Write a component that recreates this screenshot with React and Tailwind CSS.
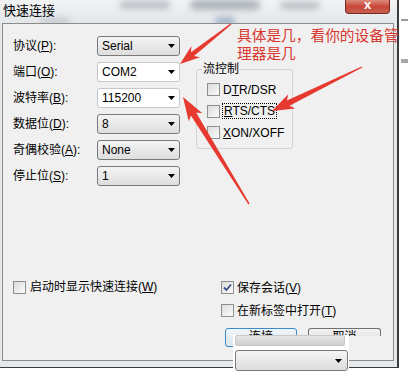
import React from 'react';

// tapered annotation arrow, tail -> tip
function arrowPts(x1, y1, x2, y2, head, headW, tail, neck) {
  const dx = x2 - x1;
  const dy = y2 - y1;
  const len = Math.hypot(dx, dy);
  const ux = dx / len;
  const uy = dy / len;
  const px = -uy;
  const py = ux;
  const bx = x2 - ux * head;
  const by = y2 - uy * head;
  const p = (x, y, s) => `${(x + px * s).toFixed(1)},${(y + py * s).toFixed(1)}`;
  return [
    p(x1, y1, tail),
    p(bx + ux * 2, by + uy * 2, neck),
    p(bx - ux * 2, by - uy * 2, headW),
    `${x2},${y2}`,
    p(bx - ux * 2, by - uy * 2, -headW),
    p(bx + ux * 2, by + uy * 2, -neck),
    p(x1, y1, -tail),
  ].join(' ');
}

const DownTri = () => (
  <svg width="7" height="4" viewBox="0 0 7 4" className="shrink-0">
    <polygon points="0,0 7,0 3.5,4" fill="#000" />
  </svg>
);

const Combo = ({ value, edit }) => (
  <div
    className={
      edit
        ? 'h-[20px] w-[83px] rounded-[3px] border border-[#c5c7cc] bg-white flex items-center justify-between pl-[4px] pr-[4px]'
        : 'h-[20px] w-[83px] rounded-[3px] border border-[#7a7a7a] bg-gradient-to-b from-[#f4f4f4] to-[#dedede] flex items-center justify-between pl-[4px] pr-[4px]'
    }
  >
    <span className="leading-none">{value}</span>
    <DownTri />
  </div>
);

const Box = ({ checked }) => (
  <span className="w-[13px] h-[13px] shrink-0 border border-[#8e8f8f] bg-gradient-to-br from-[#dcdcdc] to-[#fbfbfb] flex items-center justify-center">
    {checked && (
      <svg width="9" height="9" viewBox="0 0 9 9">
        <path d="M1 4.5 L3.5 7 L8 1.5" stroke="#3b4f8a" strokeWidth="1.8" fill="none" />
      </svg>
    )}
  </span>
);

const Label = ({ text, k }) => (
  <span className="leading-none whitespace-nowrap">
    {text}(<u>{k}</u>):
  </span>
);

const rows = [
  ['协议', 'P', 'Serial', false],
  ['端口', 'O', 'COM2', true],
  ['波特率', 'B', '115200', true],
  ['数据位', 'D', '8', false],
  ['奇偶校验', 'A', 'None', false],
  ['停止位', 'S', '1', false],
];

export default function App() {
  return (
    <div className="relative w-[408px] h-[376px] overflow-hidden bg-white text-[12px] text-black font-['Liberation_Sans','Noto_Sans_CJK_SC',sans-serif]">
      <div className="w-[399px] h-[368px] border-r-2 border-b border-[#3c3c3c] bg-[#e6e9ec] flex flex-col">
        {/* title bar */}
        <div className="relative h-[23px] flex items-start justify-between pr-[7px] bg-gradient-to-b from-[#f1f3f5] to-[#e4e7ea] overflow-hidden">
          <div className="absolute left-[120px] top-[1px] w-[50px] h-[8px] rounded-full bg-[#b9bec4] blur-[3px]" />
          <div className="absolute left-[190px] top-[0px] w-[70px] h-[10px] rounded-full bg-[#aeb4ba] blur-[3px]" />
          <div className="absolute left-[280px] top-[2px] w-[40px] h-[7px] rounded-full bg-[#b6bcc2] blur-[3px]" />
          <div className="absolute left-[40px] top-[18px] w-[30px] h-[6px] rounded-full bg-[#c3c8cd] blur-[3px]" />
          <div className="absolute left-[215px] top-[17px] w-[20px] h-[8px] rounded-full bg-[#9fb0c8] blur-[3px]" />
          <span className="relative pl-[3px] pt-[3px] text-[13px] leading-[16px]">快速连接</span>
          <div className="relative w-[45px] h-[14px] rounded-b-[4px] border border-t-0 border-[#7a2a20] bg-gradient-to-b from-[#d98a7c] via-[#c9473a] to-[#c4604f] flex items-start justify-center">
            <span className="text-white font-bold text-[13px] leading-[10px]">x</span>
          </div>
        </div>

        {/* content panel */}
        <div className="ml-[2px] w-[392px] h-[338px] border border-[#8b8b8b] bg-[#f0f0f0] flex flex-col pl-[10px] pt-[12px]">
          <div className="flex items-start">
            <div className="grid grid-cols-[84px_83px] gap-y-[6px]">
              {rows.map(([t, k, v, e]) => (
                <React.Fragment key={t}>
                  <div className="h-[20px] flex items-center">
                    <Label text={t} k={k} />
                  </div>
                  <Combo value={v} edit={e} />
                </React.Fragment>
              ))}
            </div>
            <fieldset className="ml-[16px] mt-[26px] w-[97px] h-[87px] border border-[#d3d3d3] rounded-[3px] pl-[10px] pt-[7px]">
              <legend className="ml-[-5px] px-[1px] text-[12px] leading-[14px]">流控制</legend>
              <div className="flex flex-col gap-[8.5px]">
                <div className="flex items-center gap-[3px] h-[13px]">
                  <Box />
                  <span className="leading-none">
                    D<u>T</u>R/DSR
                  </span>
                </div>
                <div className="flex items-center gap-[2px] h-[13px]">
                  <Box />
                  <span className="leading-none border border-dotted border-black px-[1px] py-[1px]">
                    <u>R</u>TS/CTS
                  </span>
                </div>
                <div className="flex items-center gap-[3px] h-[13px]">
                  <Box />
                  <span className="leading-none">
                    <u>X</u>ON/XOFF
                  </span>
                </div>
              </div>
            </fieldset>
          </div>

          <div className="mt-[94px] flex items-start">
            <div className="w-[208px] flex items-center gap-[4px] h-[14px]">
              <Box />
              <span className="leading-none">
                启动时显示快速连接(<u>W</u>)
              </span>
            </div>
            <div className="mt-[1px] flex flex-col">
              <div className="flex items-center gap-[3px] h-[13px]">
                <Box checked />
                <span className="leading-none">
                  保存会话(<u>V</u>)
                </span>
              </div>
              <div className="mt-[10px] flex items-center gap-[3px] h-[13px]">
                <Box />
                <span className="leading-none">
                  在新标签中打开(<u>T</u>)
                </span>
              </div>
              <div className="mt-[11px] ml-[4px] flex items-start gap-[11px]">
                <div className="w-[72px] h-[19px] rounded-[3px] border border-[#3c8ccc] bg-gradient-to-b from-[#f0f5fa] to-[#dbe6f0] flex justify-center pt-[2px] overflow-hidden">
                  <span className="leading-[12px]">连接</span>
                </div>
                <div className="w-[73px] h-[8px] rounded-t-[3px] border border-b-0 border-[#707070] bg-gradient-to-b from-[#f2f2f2] to-[#e8e8e8] flex justify-center pt-[2px] overflow-hidden">
                  <span className="leading-[12px]">取消</span>
                </div>
              </div>
            </div>
          </div>
        </div>
      </div>

      {/* right edge marks */}
      <div className="absolute left-[401px] top-[19px] w-[7px] h-[2px] bg-[#9a9a9a]" />
      <div className="absolute left-[401px] top-[59px] w-[7px] h-[4px] bg-[#a8a8a8]" />

      {/* pasted dropdown fragment over the buttons */}
      <div className="absolute left-[233px] top-[335px] w-[116px] h-[41px] bg-white flex flex-col pl-[2px]">
        <div className="w-[110px] h-[11px] rounded-[2px] border border-[#c8c8c8] bg-gradient-to-b from-[#e6e6e6] to-[#cfcfcf]" />
        <div className="mt-[4px] w-[113px] h-[21px] rounded-[3px] border border-[#7a7a7a] bg-gradient-to-b from-[#f6f6f6] to-[#dcdcdc] flex items-center justify-end pr-[5px]">
          <DownTri />
        </div>
      </div>

      {/* annotation */}
      <div className="absolute left-[237px] top-[26px] text-[#d9362f] text-[14.7px] leading-[18px] whitespace-nowrap font-['Noto_Sans_CJK_SC',sans-serif]">
        具体是几，看你的设备管
        <br />
        理器是几
      </div>
      <svg className="absolute left-0 top-0" width="408" height="376" viewBox="0 0 408 376">
        <polygon points={arrowPts(231, 24, 180, 64, 18, 7, 0.7, 2.5)} fill="#e63a31" />
        <polygon points={arrowPts(249, 204, 183, 97, 22, 8, 0.7, 3)} fill="#e63a31" />
        <polygon points={arrowPts(362, 67, 272, 111, 20, 8, 0.7, 3)} fill="#e63a31" />
      </svg>
    </div>
  );
}
